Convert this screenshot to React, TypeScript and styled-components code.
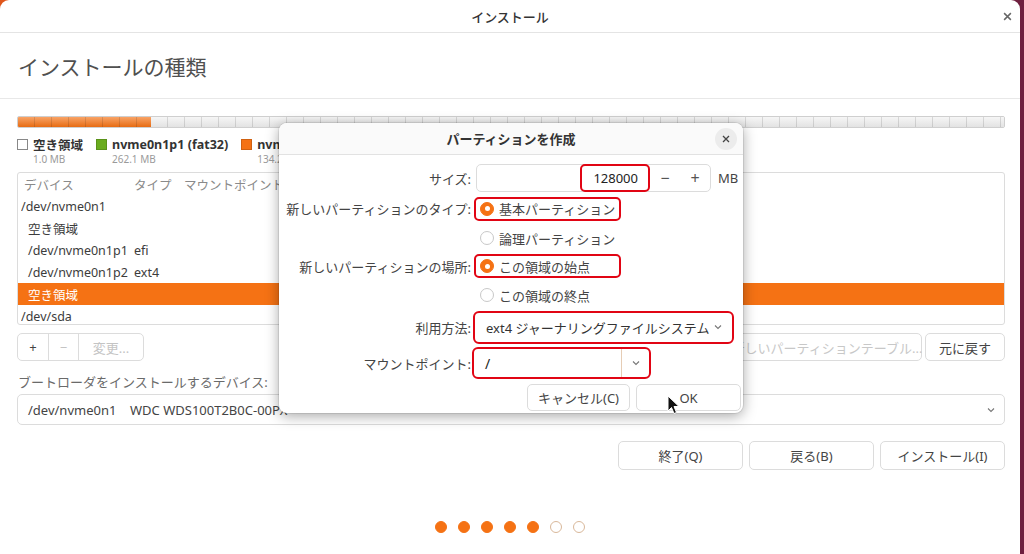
import React from "react";
import styled, { createGlobalStyle } from "styled-components";

const ORANGE = "#f57214";
const RED = "#e10514";
const TEXT = "#3c3c3c";
const MUTED = "#8a8a8a";
const BORDER = "#dcdcdc";

const Global = createGlobalStyle`
  html, body { margin: 0; padding: 0; }
  body {
    width: 1024px;
    height: 554px;
    overflow: hidden;
    background: linear-gradient(90deg, #e0561b 0%, #b0343a 50%, #6e1f3f 100%);
    font-family: "Noto Sans", "Noto Sans CJK JP", sans-serif;
    color: ${TEXT};
  }
  * { box-sizing: border-box; }
`;

const Window = styled.div`
  position: relative;
  width: 1020px;
  height: 554px;
  background: #fff;
  border-radius: 9px 9px 0 0;
  display: flex;
  flex-direction: column;
`;

const TitleBar = styled.div`
  height: 33px;
  flex: none;
  display: flex;
  align-items: center;
  justify-content: center;
  border-bottom: 1px solid #e4e4e4;
  font-size: 13px;
  font-weight: 500;
  color: #333;
  position: relative;
`;

const WinClose = styled.span`
  position: absolute;
  right: 8px;
  top: 8px;
  font-size: 14px;
  color: #666;
  line-height: 16px;
`;

const Heading = styled.div`
  height: 66px;
  flex: none;
  display: flex;
  align-items: center;
  padding-left: 18px;
  font-size: 21px;
  font-weight: 400;
  color: #505050;
  border-bottom: 1px solid #e8e8e8;
`;

const Content = styled.div`
  padding: 17px 15px 0 17px;
  display: flex;
  flex-direction: column;
`;

const PartBar = styled.div`
  height: 12px;
  display: flex;
  border: 1px solid #cfcfcf;
  border-radius: 2px;
  overflow: hidden;
`;

const PartSeg = styled.div<{ $color: string; $w?: number }>`
  ${(p) => (p.$w ? `width: ${p.$w}px; flex: none;` : "flex: 1;")}
  background-color: ${(p) => p.$color};
  background-image: repeating-linear-gradient(
    90deg,
    transparent 0px,
    transparent 16px,
    rgba(0, 0, 0, 0.12) 16px,
    rgba(0, 0, 0, 0.12) 17px
  ), linear-gradient(180deg, rgba(255,255,255,0.35), rgba(0,0,0,0.06));
`;

const Legend = styled.div`
  display: flex;
  gap: 13px;
  margin-top: 8px;
  height: 36px;
`;

const LegendItem = styled.div`
  display: grid;
  grid-template-columns: 16px auto;
  grid-template-rows: 16px 14px;
  align-items: center;
`;

const Swatch = styled.span<{ $color?: string }>`
  width: 11px;
  height: 11px;
  background: ${(p) => p.$color || "#fff"};
  border: 1px solid ${(p) => (p.$color ? "rgba(0,0,0,0.15)" : "#888")};
`;

const LegendName = styled.span`
  font-size: 12.5px;
  font-weight: 700;
  color: #333;
  white-space: nowrap;
`;

const LegendSize = styled.span`
  grid-column: 2;
  font-size: 10px;
  color: #9a9a9a;
`;

const Table = styled.div`
  height: 153px;
  border: 1px solid ${BORDER};
  border-radius: 3px;
  display: flex;
  flex-direction: column;
  padding-top: 0px;
  overflow: hidden;
`;

const TRow = styled.div<{ $selected?: boolean; $header?: boolean }>`
  height: 22px;
  flex: none;
  display: grid;
  grid-template-columns: 113px 50px 1fr;
  align-items: center;
  font-size: 12.5px;
  padding-left: 3px;
  background: ${(p) => (p.$selected ? ORANGE : "transparent")};
  color: ${(p) => (p.$selected ? "#fff" : p.$header ? MUTED : TEXT)};
  white-space: nowrap;
`;

const TCell = styled.span<{ $indent?: number }>`
  padding-left: ${(p) => p.$indent || 0}px;
  overflow: hidden;
`;

const ButtonRow = styled.div`
  display: flex;
  justify-content: space-between;
  margin-top: 8px;
  height: 28px;
`;

const Segmented = styled.div`
  display: flex;
  border: 1px solid ${BORDER};
  border-radius: 5px;
  overflow: hidden;
`;

const SegBtn = styled.div<{ $w: number; $disabled?: boolean }>`
  width: ${(p) => p.$w}px;
  display: flex;
  align-items: center;
  justify-content: center;
  font-size: 13px;
  color: ${(p) => (p.$disabled ? "#c4c4c4" : "#444")};
  & + & { border-left: 1px solid ${BORDER}; }
`;

const RightBtns = styled.div`
  display: flex;
  gap: 3px;
`;

const Btn = styled.div<{ $w: number; $h?: number; $disabled?: boolean }>`
  width: ${(p) => p.$w}px;
  height: ${(p) => p.$h || 28}px;
  border: 1px solid ${BORDER};
  border-radius: 5px;
  background: #fff;
  display: flex;
  align-items: center;
  justify-content: center;
  font-size: 13px;
  color: ${(p) => (p.$disabled ? "#c8c8c8" : "#444")};
  white-space: nowrap;
`;

const Label = styled.div`
  margin-top: 10px;
  font-size: 13px;
  color: #6a6a6a;
  height: 20px;
  display: flex;
  align-items: center;
  padding-left: 1px;
`;

const Combo = styled.div`
  margin-top: 3px;
  height: 31px;
  border: 1px solid ${BORDER};
  border-radius: 5px;
  display: flex;
  align-items: center;
  padding: 0 8px 0 10px;
  font-size: 13px;
  color: #444;
`;

const ComboText = styled.span<{ $w?: number }>`
  ${(p) => (p.$w ? `width: ${p.$w}px;` : "flex: 1;")}
  white-space: nowrap;
`;

const NavRow = styled.div`
  display: flex;
  justify-content: flex-end;
  gap: 6px;
  margin-top: 16px;
`;

const Dots = styled.div`
  margin-top: auto;
  padding-bottom: 21px;
  display: flex;
  justify-content: center;
  gap: 11px;
`;

const Dot = styled.span<{ $on?: boolean }>`
  width: 12px;
  height: 12px;
  border-radius: 50%;
  background: ${(p) => (p.$on ? ORANGE : "#fff")};
  border: 1.5px solid ${(p) => (p.$on ? ORANGE : "#d9b89a")};
`;

/* ---------- Dialog ---------- */

const Dialog = styled.div`
  position: absolute;
  left: 279px;
  top: 123px;
  width: 464px;
  height: 290px;
  background: #fff;
  border-radius: 8px;
  box-shadow: 0 3px 14px rgba(0, 0, 0, 0.35), 0 0 0 1px rgba(0, 0, 0, 0.08);
  display: flex;
  flex-direction: column;
`;

const DlgTitle = styled.div`
  height: 32px;
  flex: none;
  display: flex;
  align-items: center;
  justify-content: center;
  font-size: 13px;
  font-weight: 700;
  color: #333;
  border-bottom: 1px solid #e2e2e2;
  background: #fafafa;
  border-radius: 8px 8px 0 0;
  position: relative;
`;

const DlgClose = styled.span`
  position: absolute;
  right: 6px;
  top: 5px;
  width: 22px;
  height: 22px;
  border-radius: 50%;
  background: #ececec;
  display: flex;
  align-items: center;
  justify-content: center;
  color: #444;
`;

const DlgBody = styled.div`
  padding-top: 8px;
  display: flex;
  flex-direction: column;
`;

const FormRow = styled.div<{ $h: number }>`
  height: ${(p) => p.$h}px;
  display: grid;
  grid-template-columns: 192px 1fr;
  column-gap: 5px;
  align-items: center;
`;

const FLabel = styled.span`
  text-align: right;
  font-size: 13px;
  color: #444;
  white-space: nowrap;
`;

const Control = styled.div`
  display: flex;
  align-items: center;
  gap: 7px;
  height: 100%;
`;

const Spin = styled.div`
  width: 235px;
  height: 28px;
  border: 1px solid ${BORDER};
  border-radius: 5px;
  display: flex;
  align-items: stretch;
`;

const SpinEntry = styled.div`
  flex: 1;
  display: flex;
  justify-content: flex-end;
`;

const NumHighlight = styled.span`
  border: 2px solid ${RED};
  border-radius: 5px;
  margin: -1px 0;
  padding: 0 10px 0 11px;
  display: flex;
  align-items: center;
  font-size: 13px;
  color: #222;
`;

const SpinBtn = styled.span`
  width: 30px;
  display: flex;
  align-items: center;
  justify-content: center;
  font-size: 16px;
  color: #555;
`;

const Unit = styled.span`
  font-size: 13px;
  color: #444;
`;

const RadioOpt = styled.div<{ $hl?: boolean }>`
  margin-left: -2px;
  height: 24px;
  display: inline-flex;
  align-items: center;
  gap: 5px;
  padding: 0 7px 0 4px;
  border: 2px solid ${(p) => (p.$hl ? RED : "transparent")};
  border-radius: 5px;
  font-size: 13px;
  color: #444;
  width: 147px;
  white-space: nowrap;
`;

const RadioCircle = styled.span<{ $on?: boolean }>`
  width: 14px;
  height: 14px;
  border-radius: 50%;
  flex: none;
  background: ${(p) => (p.$on ? ORANGE : "#fff")};
  border: 1px solid ${(p) => (p.$on ? ORANGE : "#c8c8c8")};
  display: flex;
  align-items: center;
  justify-content: center;
  &::after {
    content: "";
    width: 5px;
    height: 5px;
    border-radius: 50%;
    background: #fff;
    display: ${(p) => (p.$on ? "block" : "none")};
  }
`;

const HlCombo = styled.div`
  margin-left: -3px;
  width: 261px;
  height: 33px;
  border: 2px solid ${RED};
  border-radius: 6px;
  display: flex;
  align-items: center;
  padding: 0 9px 0 11px;
  font-size: 13px;
  color: #333;
`;

const HlEntry = styled.div`
  margin-left: -4px;
  width: 179px;
  height: 32px;
  border: 2px solid ${RED};
  border-radius: 6px;
  display: flex;
  align-items: stretch;
`;

const EntryText = styled.span`
  flex: 1;
  display: flex;
  align-items: center;
  padding-left: 11px;
  font-size: 14px;
  color: #222;
`;

const EntryBtn = styled.span`
  width: 28px;
  border-left: 1px solid #e6cdb5;
  display: flex;
  align-items: center;
  justify-content: center;
`;

const DlgButtons = styled.div`
  margin-top: 2px;
  display: flex;
  justify-content: flex-end;
  gap: 6px;
  padding-right: 2px;
`;

const Cursor = styled.svg`
  position: absolute;
  left: 388px;
  top: 272px;
`;

const Chevron = ({ size = 10, color = "#777" }: { size?: number; color?: string }) => (
  <svg width={size} height={size} viewBox="0 0 10 10">
    <path d="M2 3.5 L5 6.5 L8 3.5" fill="none" stroke={color} strokeWidth="1.1" />
  </svg>
);

const XIcon = ({ size = 8, color = "#555" }: { size?: number; color?: string }) => (
  <svg width={size} height={size} viewBox="0 0 8 8">
    <path d="M1 1 L7 7 M7 1 L1 7" stroke={color} strokeWidth="1.3" />
  </svg>
);

const rows: { dev: string; type?: string; indent?: number; selected?: boolean }[] = [
  { dev: "/dev/nvme0n1" },
  { dev: "空き領域", indent: 7 },
  { dev: "/dev/nvme0n1p1", type: "efi", indent: 7 },
  { dev: "/dev/nvme0n1p2", type: "ext4", indent: 7 },
  { dev: "空き領域", indent: 7, selected: true },
  { dev: "/dev/sda" },
];

export default function App() {
  return (
    <>
      <Global />
      <Window>
        <TitleBar>
          インストール
          <WinClose>
            <XIcon size={9} color="#666" />
          </WinClose>
        </TitleBar>
        <Heading>インストールの種類</Heading>
        <Content>
          <PartBar>
            <PartSeg $color={ORANGE} $w={133} />
            <PartSeg $color="#f1f1f1" />
          </PartBar>
          <Legend>
            <LegendItem>
              <Swatch />
              <LegendName>空き領域</LegendName>
              <LegendSize>1.0 MB</LegendSize>
            </LegendItem>
            <LegendItem>
              <Swatch $color="#6aac1e" />
              <LegendName>nvme0n1p1 (fat32)</LegendName>
              <LegendSize>262.1 MB</LegendSize>
            </LegendItem>
            <LegendItem>
              <Swatch $color={ORANGE} />
              <LegendName>nvme0n1p2 (ext4)</LegendName>
              <LegendSize>134.2 GB</LegendSize>
            </LegendItem>
          </Legend>
          <Table>
            <TRow $header>
              <TCell $indent={3}>デバイス</TCell>
              <TCell>タイプ</TCell>
              <TCell>マウントポイント</TCell>
            </TRow>
            {rows.map((r, i) => (
              <TRow key={i} $selected={r.selected}>
                <TCell $indent={r.indent}>{r.dev}</TCell>
                <TCell>{r.type || ""}</TCell>
                <TCell />
              </TRow>
            ))}
          </Table>
          <ButtonRow>
            <Segmented>
              <SegBtn $w={30}>+</SegBtn>
              <SegBtn $w={30} $disabled>−</SegBtn>
              <SegBtn $w={65} $disabled>変更...</SegBtn>
            </Segmented>
            <RightBtns>
              <Btn $w={190} $disabled>新しいパーティションテーブル...</Btn>
              <Btn $w={80}>元に戻す</Btn>
            </RightBtns>
          </ButtonRow>
          <Label>ブートローダをインストールするデバイス:</Label>
          <Combo>
            <ComboText $w={102}>/dev/nvme0n1</ComboText>
            <ComboText>WDC WDS100T2B0C-00PX</ComboText>
            <Chevron />
          </Combo>
          <NavRow>
            <Btn $w={125} $h={29}>終了(Q)</Btn>
            <Btn $w={125} $h={29}>戻る(B)</Btn>
            <Btn $w={125} $h={29}>インストール(I)</Btn>
          </NavRow>
        </Content>
        <Dots>
          {[1, 1, 1, 1, 1, 0, 0].map((on, i) => (
            <Dot key={i} $on={!!on} />
          ))}
        </Dots>

        <Dialog>
          <DlgTitle>
            パーティションを作成
            <DlgClose>
              <XIcon size={8} color="#444" />
            </DlgClose>
          </DlgTitle>
          <DlgBody>
            <FormRow $h={30}>
              <FLabel>サイズ:</FLabel>
              <Control>
                <Spin>
                  <SpinEntry>
                    <NumHighlight>128000</NumHighlight>
                  </SpinEntry>
                  <SpinBtn>−</SpinBtn>
                  <SpinBtn>+</SpinBtn>
                </Spin>
                <Unit>MB</Unit>
              </Control>
            </FormRow>
            <FormRow $h={31}>
              <FLabel>新しいパーティションのタイプ:</FLabel>
              <Control>
                <RadioOpt $hl>
                  <RadioCircle $on />
                  基本パーティション
                </RadioOpt>
              </Control>
            </FormRow>
            <FormRow $h={28}>
              <span />
              <Control>
                <RadioOpt>
                  <RadioCircle />
                  論理パーティション
                </RadioOpt>
              </Control>
            </FormRow>
            <FormRow $h={28}>
              <FLabel>新しいパーティションの場所:</FLabel>
              <Control>
                <RadioOpt $hl>
                  <RadioCircle $on />
                  この領域の始点
                </RadioOpt>
              </Control>
            </FormRow>
            <FormRow $h={30}>
              <span />
              <Control>
                <RadioOpt>
                  <RadioCircle />
                  この領域の終点
                </RadioOpt>
              </Control>
            </FormRow>
            <FormRow $h={34}>
              <FLabel>利用方法:</FLabel>
              <Control>
                <HlCombo>
                  <ComboText>ext4 ジャーナリングファイルシステム</ComboText>
                  <Chevron />
                </HlCombo>
              </Control>
            </FormRow>
            <FormRow $h={38}>
              <FLabel>マウントポイント:</FLabel>
              <Control>
                <HlEntry>
                  <EntryText>/</EntryText>
                  <EntryBtn>
                    <Chevron />
                  </EntryBtn>
                </HlEntry>
              </Control>
            </FormRow>
            <DlgButtons>
              <Btn $w={103} $h={27}>キャンセル(C)</Btn>
              <Btn $w={105} $h={27}>OK</Btn>
            </DlgButtons>
          </DlgBody>
          <Cursor width="13" height="20" viewBox="0 0 13 20">
            <path
              d="M1 1 L1 16 L4.5 12.5 L7 18.5 L9.5 17.5 L7 11.5 L12 11.5 Z"
              fill="#111"
              stroke="#fff"
              strokeWidth="1"
            />
          </Cursor>
        </Dialog>
      </Window>
    </>
  );
}
